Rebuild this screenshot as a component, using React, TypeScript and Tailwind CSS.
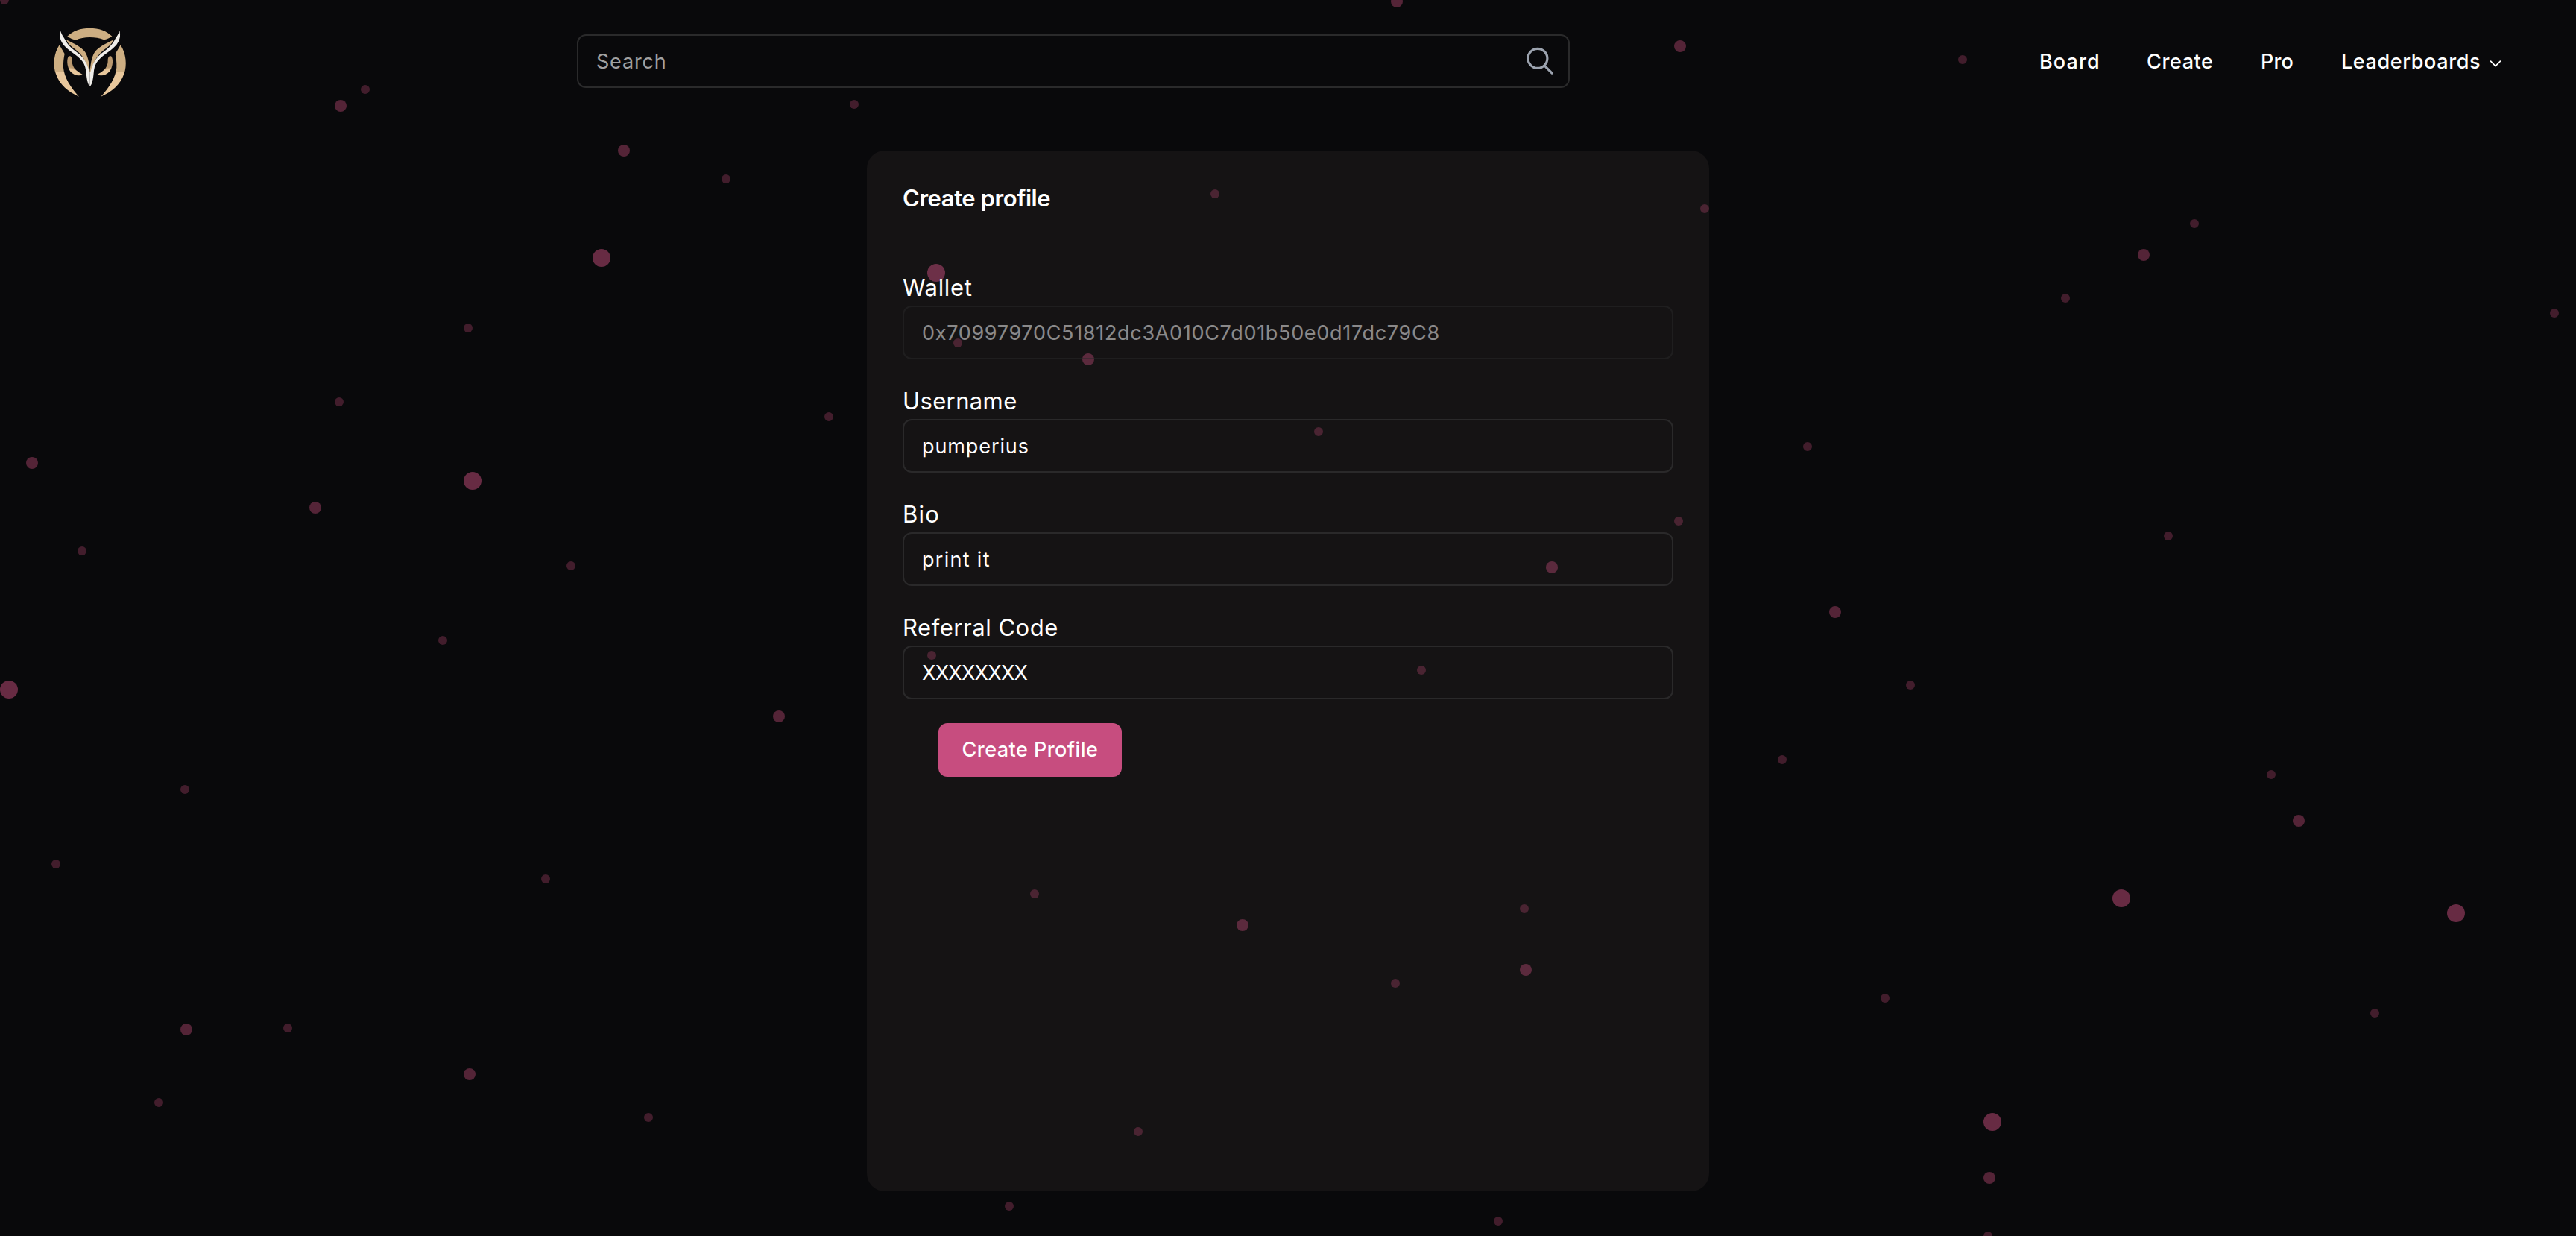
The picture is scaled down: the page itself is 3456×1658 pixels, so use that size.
import React from 'react';

type Dot = [x: number, y: number];

const SMALL_DOTS: Dot[] = [
  [6, 0], [490, 120], [1146, 140], [974, 240], [628, 440], [455, 539], [1112, 559], [110, 739], [766, 759],
  [594, 859], [248, 1059], [75, 1159], [732, 1179], [386, 1379], [213, 1479], [870, 1499],
  [2633, 80], [2944, 300], [2771, 400], [3427, 420], [2425, 599], [2909, 719],
  [2563, 919], [2391, 1019], [3047, 1039], [2529, 1339], [3186, 1359], [2667, 1658],
  [1630, 260], [1285, 460], [1769, 579], [1250, 879], [1907, 899], [2287, 280], [2252, 699],
  [1527, 1518], [1354, 1618], [2010, 1638], [1388, 1199], [2045, 1219], [1872, 1319],
];

const MEDIUM_DOTS: Dot[] = [
  [457, 142], [837, 202], [43, 621], [423, 681], [1045, 961], [250, 1381], [630, 1441],
  [2876, 342], [2462, 821], [3084, 1101], [2669, 1580], [1460, 482], [2082, 761],
  [2254, 62], [1874, 2], [1667, 1241], [2047, 1301],
];

const LARGE_DOTS: Dot[] = [
  [807, 346], [634, 645], [12, 925], [2846, 1205], [3295, 1225], [2673, 1505], [1256, 366],
];

function Dots({ dots, className }: { dots: Dot[]; className: string }) {
  return (
    <>
      {dots.map(([x, y]) => (
        <span
          key={`${x}-${y}`}
          className={`absolute -translate-x-1/2 -translate-y-1/2 rounded-full bg-[#c64d7b] ${className}`}
          style={{ left: x, top: y }}
        />
      ))}
    </>
  );
}

function HalfOwl() {
  return (
    <>
      <path
        d="M89 121 C66 155 62 205 75 238 C90 282 124 310 168 329 C134 292 108 250 105 212 C104 190 107 172 110 157 Z"
        fill="url(#band)"
      />
      <path
        d="M128 166 C136 163 140 172 140 184 C140 202 147 214 156 222 C166 231 177 236 183 241 C164 248 144 241 133 227 C122 213 117 185 124 170 Q126 166 128 166 Z"
        fill="url(#eye)"
      />
      <path d="M117 100 C150 116 176 130 189 145 C203 162 209 190 212 228 L208 232 C200 195 186 168 166 150 C146 132 124 122 117 100 Z" fill="#cdae82" />
      <path
        d="M93 64 C89 82 90 94 99 110 C112 134 142 150 164 169 C184 187 194 200 197 234 C199 258 203 280 212 288 L212 231 L210 231 C202 197 190 176 168 157 C146 140 126 126 115 105 C107 90 99 82 93 64 Z"
        fill="#f0eeea"
      />
    </>
  );
}

function Logo() {
  return (
    <svg viewBox="0 -18 420 408" className="h-[136px] w-[140px] shrink-0">
      <defs>
        <linearGradient id="band" gradientUnits="userSpaceOnUse" x1="0" y1="228" x2="0" y2="232">
          <stop offset="0" stopColor="#cdae82" />
          <stop offset="1" stopColor="#e8c79c" />
        </linearGradient>
        <linearGradient id="eye" gradientUnits="userSpaceOnUse" x1="140" y1="212" x2="138" y2="220">
          <stop offset="0" stopColor="#ba996f" />
          <stop offset="1" stopColor="#e8c79c" />
        </linearGradient>
      </defs>
      <path d="M121 86 C143 64 175 53 211 53 C248 53 279 64 301 86 C289 94 279 97 268 100 C250 93 232 90 211 90 C190 90 172 94 155 101 C144 99 132 93 121 86 Z" fill="#cdae82" />
      <HalfOwl />
      <g transform="translate(424 0) scale(-1 1)">
        <HalfOwl />
      </g>
    </svg>
  );
}

function SearchIcon() {
  return (
    <svg viewBox="0 0 24 24" className="size-11 shrink-0" fill="none" stroke="#9ca3af" strokeWidth="1.75" strokeLinecap="round">
      <circle cx="10.3" cy="10" r="7.1" />
      <path d="M15.4 15.3 20.8 20.8" />
    </svg>
  );
}

function Header() {
  return (
    <header className="relative z-10 flex h-[164px] items-center pl-[50px] text-[27px] font-medium">
      <Logo />
      <div className="ml-[584px] flex h-[72px] w-[1332px] shrink-0 items-center rounded-xl border-2 border-[#2a2a2b] pr-4 pl-6">
        <input
          placeholder="Search"
          className="min-w-0 flex-1 bg-transparent pt-0.5 font-normal tracking-[0.8px] outline-none placeholder:text-[#a1a1a1]"
        />
        <SearchIcon />
      </div>
      <nav className="ml-[630px] flex shrink-0 items-center gap-16 pt-0.5 whitespace-nowrap">
        <a className="w-20 tracking-[1.1px]">Board</a>
        <a className="w-[89px] tracking-[0.6px]">Create</a>
        <a className="w-[44px] tracking-[0.1px]">Pro</a>
        <a className="flex items-center tracking-[0.6px]">
          <span className="w-[199px]">Leaderboards</span>
          <svg viewBox="0 0 16 9" className="mt-[5px] h-[9px] w-4" fill="none" stroke="white" strokeWidth="1.8" strokeLinecap="round" strokeLinejoin="round">
            <path d="M1.6 1.2 8 7.7 14.4 1.2" />
          </svg>
        </a>
      </nav>
    </header>
  );
}

type FieldProps = {
  label: string;
  value: string;
  labelClass: string;
  valueClass: string;
  disabled?: boolean;
};

function Field({ label, value, labelClass, valueClass, disabled }: FieldProps) {
  return (
    <div className="flex flex-col">
      <label className={`h-12 text-[31px] leading-[48px] ${labelClass}`}>{label}</label>
      <input
        defaultValue={value}
        disabled={disabled}
        className={`h-[72px] rounded-xl border-2 border-[#2a292a] bg-transparent px-6 text-[27px] text-white outline-none disabled:opacity-50 ${valueClass}`}
      />
    </div>
  );
}

export default function App() {
  return (
    <div className="relative isolate h-[1658px] w-full overflow-hidden bg-[#09090b] font-['Inter',sans-serif] text-white">
      <div className="absolute inset-0">
        <Dots dots={SMALL_DOTS} className="z-[1] size-3 opacity-30" />
        <Dots dots={MEDIUM_DOTS} className="z-[1] size-4 opacity-40" />
        <Dots dots={LARGE_DOTS} className="z-[1] size-6 opacity-50" />
      </div>
      <Header />
      <main className="mt-[38px] ml-[1163px] h-[1396px] w-[1130px] rounded-3xl bg-[#151314] p-12">
        <div className="relative z-10 flex flex-col">
          <h1 className="h-8 text-[31px] leading-8 font-semibold tracking-[-0.44px]">Create profile</h1>
          <form className="mt-20 flex flex-col gap-8">
            <Field
              label="Wallet"
              value="0x70997970C51812dc3A010C7d01b50e0d17dc79C8"
              labelClass="tracking-[0.64px]"
              valueClass="tracking-[0.69px]"
              disabled
            />
            <Field label="Username" value="pumperius" labelClass="tracking-[0.37px]" valueClass="tracking-[0.9px]" />
            <Field label="Bio" value="print it" labelClass="tracking-[1.2px]" valueClass="tracking-[1.3px]" />
            <Field label="Referral Code" value="XXXXXXXX" labelClass="tracking-[0.53px]" valueClass="tracking-[-0.77px]" />
            <button
              type="button"
              className="ml-12 h-[72px] w-[246px] rounded-xl bg-[#c74d7f] text-[27px] font-medium tracking-[0.45px]"
            >
              Create Profile
            </button>
          </form>
        </div>
      </main>
    </div>
  );
}
